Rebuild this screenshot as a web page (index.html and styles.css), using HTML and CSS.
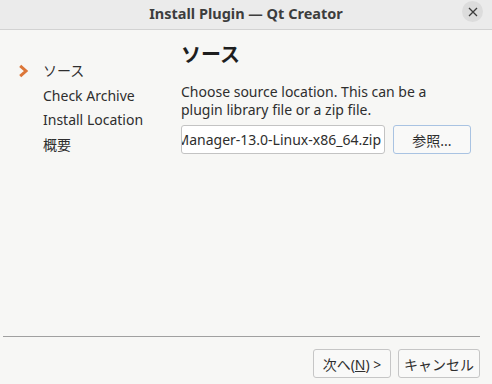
FILE: index.html
```html
<!DOCTYPE html>
<html lang="ja">
<head>
<meta charset="utf-8">
<title>Install Plugin — Qt Creator</title>
<link rel="stylesheet" href="styles.css">
</head>
<body>
<div class="window">
  <header class="titlebar">
    <span class="title">Install Plugin — Qt Creator</span>
    <button class="close" aria-label="閉じる">
      <svg width="10" height="10" viewBox="0 0 10 10"><path d="M1 1L9 9M9 1L1 9" stroke="#3c3c3c" stroke-width="1.3" fill="none"/></svg>
    </button>
  </header>
  <div class="dialog">
    <div class="main">
      <nav class="steps">
        <div class="step current">
          <svg class="chev" width="11" height="14" viewBox="0 0 11 14"><path d="M2.2 1.8L8 7L2.2 12.2" stroke="#dc7638" stroke-width="3" fill="none" stroke-linejoin="miter"/></svg>
          <span>ソース</span>
        </div>
        <div class="step">Check Archive</div>
        <div class="step">Install Location</div>
        <div class="step">概要</div>
      </nav>
      <section class="page">
        <h1 class="page-title">ソース</h1>
        <p class="desc">Choose source location. This can be a plugin library file or a zip file.</p>
        <div class="row">
          <div class="field"><span>Manager-13.0-Linux-x86_64.zip</span></div>
          <button class="btn default">参照...</button>
        </div>
      </section>
    </div>
    <div class="separator"></div>
    <div class="buttons">
      <button class="btn">次へ(<u>N</u>) &gt;</button>
      <button class="btn">キャンセル</button>
    </div>
  </div>
</div>
</body>
</html>
```

FILE: styles.css
```css
* { box-sizing: border-box; }
html, body { margin: 0; padding: 0; }
body {
  width: 492px;
  height: 384px;
  overflow: hidden;
  background: #f7f7f5;
  font-family: "Noto Sans", "Noto Sans CJK JP", sans-serif;
  color: #2e2e2e;
}
.window { display: flex; flex-direction: column; height: 384px; }
.titlebar {
  height: 30px;
  flex: none;
  background: #ebebeb;
  border-bottom: 1px solid #d2d2d2;
  display: flex;
  align-items: center;
  justify-content: center;
  position: relative;
}
.title {
  font-weight: bold;
  font-size: 14.5px;
  color: #3d3d3d;
  margin-top: -3px;
}
.close {
  position: absolute;
  right: 9px;
  top: 1px;
  width: 21px;
  height: 21px;
  border-radius: 50%;
  border: none;
  background: #dcdcdc;
  padding: 0;
  display: flex;
  align-items: center;
  justify-content: center;
}
.dialog { flex: 1; display: flex; flex-direction: column; }
.main { flex: 1; display: flex; }
.steps {
  width: 181px;
  padding: 29px 0 0 18px;
  font-size: 14px;
  color: #2e2e2e;
}
.step {
  height: 24.5px;
  line-height: 20px;
  padding: 2px 0 2px 25px;
  position: relative;
  white-space: nowrap;
}
.step.current .chev { position: absolute; left: 0; top: 5px; }
.page { flex: 1; padding-top: 10px; }
.page-title {
  margin: 0;
  font-size: 20px;
  font-weight: bold;
  color: #1e1e1e;
  line-height: 30px;
}
.desc {
  margin: 13px 0 0;
  width: 260px;
  font-size: 14px;
  line-height: 18px;
  color: #2e2e2e;
}
.row { display: flex; gap: 8px; margin-top: 6px; }
.field {
  width: 204px;
  height: 29px;
  border: 1px solid #c3c3c3;
  border-radius: 3px;
  background: #ffffff;
  display: flex;
  justify-content: flex-end;
  align-items: center;
  overflow: hidden;
  white-space: nowrap;
  font-size: 14px;
  padding-right: 3px;
  color: #2e2e2e;
}
.field span { flex: none; }
.btn {
  height: 29px;
  border: 1px solid #c6c6c6;
  border-radius: 3px;
  background: #f9f9f8;
  font-family: "Noto Sans", "Noto Sans CJK JP", sans-serif;
  font-size: 14px;
  color: #2e2e2e;
  padding: 0 10px;
}
.btn.default { width: 78px; border-color: #a9c3e2; }
.separator {
  height: 1px;
  background: #a0a0a0;
  margin: 0 12px 0 3px;
  flex: none;
}
.buttons {
  display: flex;
  justify-content: flex-end;
  gap: 7px;
  padding: 12px 12px 6px 0;
  flex: none;
}
.buttons .btn { width: 78px; padding: 0; }
.buttons .btn + .btn { width: 82px; }
```
